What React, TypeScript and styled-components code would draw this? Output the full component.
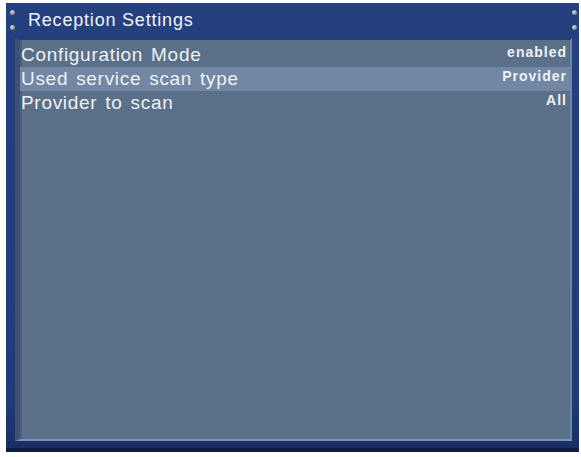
import React from 'react';
import styled, {createGlobalStyle} from 'styled-components';

const GlobalStyle = createGlobalStyle`
  html, body {
    margin: 0;
    padding: 0;
    background: #ffffff;
  }
`;

const Page = styled.div`
  width: 581px;
  height: 457px;
  padding: 3px 2px 5px 6px;
  box-sizing: border-box;
  font-family: "Liberation Sans", Arial, sans-serif;
`;

const Frame = styled.div`
  height: 100%;
  display: flex;
  flex-direction: column;
  background: linear-gradient(180deg, #24407f 0%, #203b78 90%, #1a2d63 100%);
  border-bottom: 4px solid #101c45;
  box-sizing: border-box;
`;

const TitleBar = styled.div`
  height: 35px;
  display: flex;
  align-items: center;
  padding: 0 2px 0 4px;
  color: #f2f4fa;
`;

const ScrewColumn = styled.div`
  display: flex;
  flex-direction: column;
  gap: 10px;
  margin-top: -2px;
`;

const Screw = styled.span`
  width: 5px;
  height: 5px;
  border-radius: 50%;
  background: radial-gradient(circle at 35% 35%, #d8dde6 0%, #8a93a6 60%, #4b5570 100%);
`;

const Title = styled.span`
  flex: 1;
  padding-left: 13px;
  font-size: 18px;
  letter-spacing: 0.8px;
`;

const Panel = styled.div`
  flex: 1;
  margin: 0 7px 7px 9px;
  background: #5a6f88;
  border-top: 2px solid #2a3f6e;
  border-left: 5px solid #3d5072;
  border-right: 2px solid #6c86a6;
  border-bottom: 2px solid #7590c0;
  box-shadow: inset 2px 0 0 #4a5f7c;
  padding-top: 3px;
`;

const Row = styled.div<{ selected?: boolean }>`
  height: 24px;
  display: flex;
  align-items: center;
  justify-content: space-between;
  padding: 0 3px 0 1px;
  background: ${p => (p.selected ? '#7187a3' : 'transparent')};
`;

const Label = styled.span`
  color: #eef2f6;
  font-size: 19px;
  letter-spacing: 0.7px;
  word-spacing: 2px;
`;

const Value = styled.span`
  color: #eef2f6;
  font-size: 14px;
  font-weight: bold;
  letter-spacing: 1px;
  align-self: flex-start;
  margin-top: 1px;
`;

const rows = [
    {label: 'Configuration Mode', value: 'enabled'},
    {label: 'Used service scan type', value: 'Provider', selected: true},
    {label: 'Provider to scan', value: 'All'},
];

export default function App() {
    return (
        <Page>
            <GlobalStyle/>
            <Frame>
                <TitleBar>
                    <ScrewColumn>
                        <Screw/>
                        <Screw/>
                    </ScrewColumn>
                    <Title>Reception Settings</Title>
                    <ScrewColumn>
                        <Screw/>
                        <Screw/>
                    </ScrewColumn>
                </TitleBar>
                <Panel>
                    {rows.map(r => (
                        <Row key={r.label} selected={r.selected}>
                            <Label>{r.label}</Label>
                            <Value>{r.value}</Value>
                        </Row>
                    ))}
                </Panel>
            </Frame>
        </Page>
    );
}
